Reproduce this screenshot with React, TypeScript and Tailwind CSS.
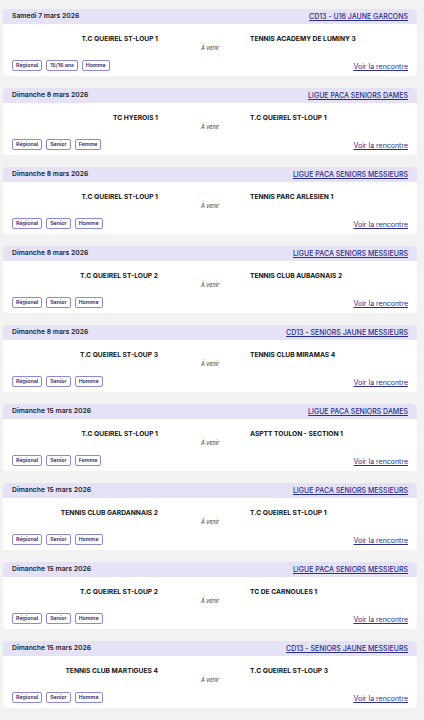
import React from 'react';

type Match = {
  date: string;
  competition: string;
  home: string;
  away: string;
  tags: string[];
};

const matches: Match[] = [
  { date: 'Samedi 7 mars 2026', competition: 'CD13 - U16 JAUNE GARCONS', home: 'T.C QUEIREL ST-LOUP 1', away: 'TENNIS ACADEMY DE LUMINY 3', tags: ['Régional', '15/16 ans', 'Homme'] },
  { date: 'Dimanche 8 mars 2026', competition: 'LIGUE PACA SENIORS DAMES', home: 'TC HYEROIS 1', away: 'T.C QUEIREL ST-LOUP 1', tags: ['Régional', 'Senior', 'Femme'] },
  { date: 'Dimanche 8 mars 2026', competition: 'LIGUE PACA SENIORS MESSIEURS', home: 'T.C QUEIREL ST-LOUP 1', away: 'TENNIS PARC ARLESIEN 1', tags: ['Régional', 'Senior', 'Homme'] },
  { date: 'Dimanche 8 mars 2026', competition: 'LIGUE PACA SENIORS MESSIEURS', home: 'T.C QUEIREL ST-LOUP 2', away: 'TENNIS CLUB AUBAGNAIS 2', tags: ['Régional', 'Senior', 'Homme'] },
  { date: 'Dimanche 8 mars 2026', competition: 'CD13 - SENIORS JAUNE MESSIEURS', home: 'T.C QUEIREL ST-LOUP 3', away: 'TENNIS CLUB MIRAMAS 4', tags: ['Régional', 'Senior', 'Homme'] },
  { date: 'Dimanche 15 mars 2026', competition: 'LIGUE PACA SENIORS DAMES', home: 'T.C QUEIREL ST-LOUP 1', away: 'ASPTT TOULON - SECTION 1', tags: ['Régional', 'Senior', 'Femme'] },
  { date: 'Dimanche 15 mars 2026', competition: 'LIGUE PACA SENIORS MESSIEURS', home: 'TENNIS CLUB GARDANNAIS 2', away: 'T.C QUEIREL ST-LOUP 1', tags: ['Régional', 'Senior', 'Homme'] },
  { date: 'Dimanche 15 mars 2026', competition: 'LIGUE PACA SENIORS MESSIEURS', home: 'T.C QUEIREL ST-LOUP 2', away: 'TC DE CARNOULES 1', tags: ['Régional', 'Senior', 'Homme'] },
  { date: 'Dimanche 15 mars 2026', competition: 'CD13 - SENIORS JAUNE MESSIEURS', home: 'TENNIS CLUB MARTIGUES 4', away: 'T.C QUEIREL ST-LOUP 3', tags: ['Régional', 'Senior', 'Homme'] },
];

function MatchCard({ match }: { match: Match }) {
  return (
    <div className="bg-white rounded-[4px] overflow-hidden">
      <div className="h-[15px] bg-[#e4e2f4] flex items-center justify-between px-[9px]">
        <span className="text-[6.8px] leading-none font-semibold text-[#1c1c2e]">{match.date}</span>
        <a href="#" className="text-[7px] leading-none font-medium text-[#2b2d8f] underline">{match.competition}</a>
      </div>
      <div className="h-[52px] px-[9px] pt-[10px] flex flex-col">
        <div className="grid grid-cols-[146px_1fr] gap-x-[92px] text-[6.7px] leading-[10px] font-bold text-[#111]">
          <span className="text-right">{match.home}</span>
          <span>{match.away}</span>
        </div>
        <div className="text-center text-[5.5px] leading-[8px] italic text-[#333]">À venir</div>
        <div className="flex items-end justify-between mt-auto mb-[5px]">
          <div className="flex gap-[4px]">
            {match.tags.map((t) => (
              <span key={t} className="h-[11px] px-[3px] flex items-center border border-[#8e88d4] rounded-[2px] text-[5.3px] leading-none font-semibold text-[#2d2a6e]">
                {t}
              </span>
            ))}
          </div>
          <a href="#" className="text-[7px] leading-[9px] text-[#2b2d8f] underline">Voir la rencontre</a>
        </div>
      </div>
    </div>
  );
}

export default function App() {
  return (
    <div className="min-h-screen bg-[#f2f2f2] pt-[9px] pl-[3px] pr-[7px] pb-[10px] flex flex-col gap-[12px]" style={{ fontFamily: 'Inter, sans-serif' }}>
      {matches.map((m, i) => (
        <MatchCard key={i} match={m} />
      ))}
    </div>
  );
}
